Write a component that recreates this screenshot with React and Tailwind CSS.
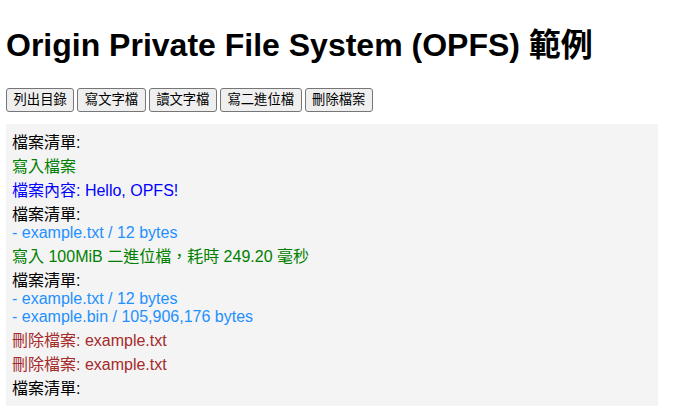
import React from "react";

const buttons = ["列出目錄", "寫文字檔", "讀文字檔", "寫二進位檔", "刪除檔案"];

function App() {
  return (
    <div
      className="min-h-screen bg-white px-[6px] text-black"
      style={{ fontFamily: '"Liberation Sans", Arial, "Noto Sans CJK TC", sans-serif' }}
    >
      <h1 className="pt-[27px] text-[32px] font-bold leading-[37px]">
        Origin Private File System (OPFS) 範例
      </h1>
      <div className="mt-[24px] flex gap-[3px]">
        {buttons.map((b) => (
          <button
            key={b}
            className="h-6 rounded-[3px] border border-[#767676] bg-[#efefef] px-[6.5px] text-[13.33px] leading-[18px] text-black"
          >
            {b}
          </button>
        ))}
      </div>
      <div className="mt-[12px] w-[652px] bg-[#f4f4f4] px-[6px] pt-[10px] pb-[8px] text-[16px] leading-[18px]">
        <div className="mb-[6px]">檔案清單:</div>
        <div className="mb-[6px] text-[#008000]">寫入檔案</div>
        <div className="mb-[6px] text-[#0000ff]">檔案內容: Hello, OPFS!</div>
        <div className="mb-[6px]">
          <div>檔案清單:</div>
          <div className="text-[#1e90ff]">- example.txt / 12 bytes</div>
        </div>
        <div className="mb-[6px] text-[#008000]">寫入 100MiB 二進位檔，耗時 249.20 毫秒</div>
        <div className="mb-[6px]">
          <div>檔案清單:</div>
          <div className="text-[#1e90ff]">- example.txt / 12 bytes</div>
          <div className="text-[#1e90ff]">- example.bin / 105,906,176 bytes</div>
        </div>
        <div className="mb-[6px] text-[#a52a2a]">刪除檔案: example.txt</div>
        <div className="mb-[6px] text-[#a52a2a]">刪除檔案: example.txt</div>
        <div>檔案清單:</div>
      </div>
    </div>
  );
}

export default App;
